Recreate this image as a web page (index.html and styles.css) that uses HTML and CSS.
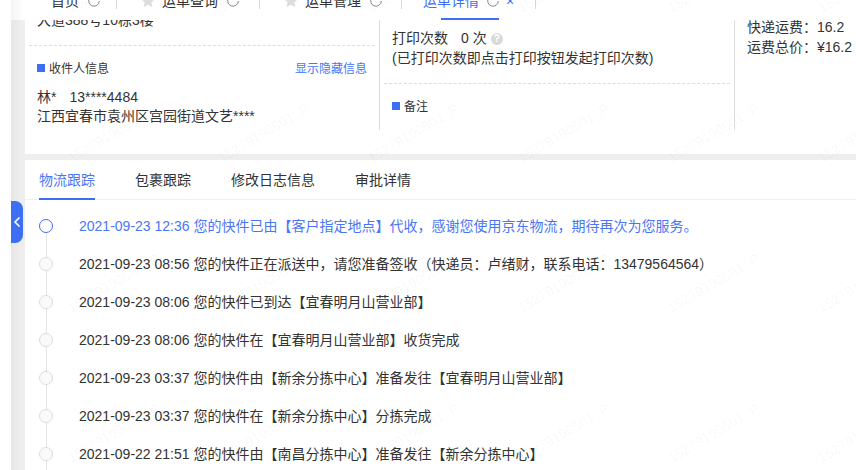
FILE: index.html
```html
<!DOCTYPE html>
<html lang="zh-CN">
<head>
    <meta charset="UTF-8">
    <title>运单详情</title>
    <link rel="stylesheet" href="styles.css">
</head>
<body>
    <svg class="icon-defs" width="0" height="0">
        <symbol id="star" viewBox="0 0 14 14"><path d="M7 0l2.1 4.5 4.9.6-3.6 3.3 1 4.8L7 10.8 2.6 13.2l1-4.8L0 5.1l4.9-.6z"/></symbol>
        <symbol id="refresh" viewBox="0 0 12 12"><path d="M10.3 2.800A5.300 5.300 0 1 0 11.300 6" fill="none" stroke="#888" stroke-width="1"/></symbol>
    </svg>
    <div class="page">
        <div class="gutter"></div>
        <div class="main">
            <!-- top tabs, scrolled partly out of view -->
            <div class="topbar">
                <div class="top-tabs">
                    <div class="top-tab tab-home"><span>首页</span><svg class="refresh"><use href="#refresh"/></svg></div>
                    <div class="top-tab tab-query"><svg class="star"><use href="#star"/></svg><span>运单查询</span><svg class="refresh"><use href="#refresh"/></svg></div>
                    <div class="top-tab tab-manage"><svg class="star"><use href="#star"/></svg><span>运单管理</span><svg class="refresh"><use href="#refresh"/></svg></div>
                    <div class="top-tab tab-detail active"><span>运单详情</span><svg class="refresh"><use href="#refresh"/></svg><span class="close">×</span></div>
                </div>
            </div>

            <div class="card info-card">
                <div class="col col-left">
                    <p class="clipped-address">大道388号10栋3楼</p>
                    <hr class="dashed">
                    <div class="section-head">
                        <span class="section-title">收件人信息</span>
                        <a class="link">显示隐藏信息</a>
                    </div>
                    <p class="line person"><span>林*</span><span class="phone">13****4484</span></p>
                    <p class="line">江西宜春市袁州区宫园街道文艺****</p>
                </div>
                <div class="col col-mid">
                    <p class="line print-count"><span>打印次数</span><span class="count">0 次</span><span class="help">?</span></p>
                    <p class="line">(已打印次数即点击打印按钮发起打印次数)</p>
                    <hr class="dashed">
                    <div class="section-head">
                        <span class="section-title">备注</span>
                    </div>
                </div>
                <div class="col-right">
                    <p class="line">快递运费：16.2</p>
                    <p class="line">运费总价：¥16.2</p>
                </div>
            </div>

            <div class="card track-card">
                <div class="track-tabs">
                    <span class="track-tab active">物流跟踪</span>
                    <span class="track-tab">包裹跟踪</span>
                    <span class="track-tab">修改日志信息</span>
                    <span class="track-tab">审批详情</span>
                </div>
                <ul class="timeline">
                    <li class="current"><i class="dot"></i>2021-09-23 12:36 您的快件已由【客户指定地点】代收，感谢您使用京东物流，期待再次为您服务。</li>
                    <li><i class="dot"></i>2021-09-23 08:56 您的快件正在派送中，请您准备签收（快递员：卢绪财，联系电话：13479564564）</li>
                    <li><i class="dot"></i>2021-09-23 08:06 您的快件已到达【宜春明月山营业部】</li>
                    <li><i class="dot"></i>2021-09-23 08:06 您的快件在【宜春明月山营业部】收货完成</li>
                    <li><i class="dot"></i>2021-09-23 03:37 您的快件由【新余分拣中心】准备发往【宜春明月山营业部】</li>
                    <li><i class="dot"></i>2021-09-23 03:37 您的快件在【新余分拣中心】分拣完成</li>
                    <li><i class="dot"></i>2021-09-22 21:51 您的快件由【南昌分拣中心】准备发往【新余分拣中心】</li>
                </ul>
            </div>
        </div>
    </div>

    <button class="collapse" title="收起">
        <svg width="8" height="12" viewBox="0 0 8 12"><path d="M6.5 1.500L2 6l4.500 4.500" fill="none" stroke="#fff" stroke-width="1.600"/></svg>
    </button>

    <!-- account watermark over the whole page -->
    <div class="watermarks">
        <span>15279190501_P</span><span>15279190501_P</span><span>15279190501_P</span><span>15279190501_P</span><span>15279190501_P</span><span>15279190501_P</span>
        <span>15279190501_P</span><span>15279190501_P</span><span>15279190501_P</span><span>15279190501_P</span><span>15279190501_P</span><span>15279190501_P</span>
        <span>15279190501_P</span><span>15279190501_P</span><span>15279190501_P</span><span>15279190501_P</span><span>15279190501_P</span><span>15279190501_P</span>
        <span>15279190501_P</span><span>15279190501_P</span><span>15279190501_P</span><span>15279190501_P</span><span>15279190501_P</span><span>15279190501_P</span>
    </div>
</body>
</html>
```

FILE: styles.css
```css
/* Common styles */
html, body {
    margin: 0;
    padding: 0;
    height: 470px;
    overflow: hidden;
}

body {
    position: relative;
    background-color: #fff;
    color: #333;
    font-family: "Liberation Sans", "Noto Sans CJK SC", sans-serif;
    font-size: 14px;
}

p {
    margin: 0;
}

.icon-defs {
    position: absolute;
}

.page {
    display: flex;
    height: 470px;
}

.gutter {
    width: 11px;
    flex: none;
}

.main {
    flex: 1;
    min-width: 0;
    background: linear-gradient(to right, #e6e6e6, #eee 10px);
}

/* Top tabs */
.topbar {
    height: 20px;
    overflow: hidden;
    background: linear-gradient(to right, #f4f4f4, #fff 12px);
}

.top-tabs {
    display: flex;
    align-items: flex-start;
    height: 28px;
    margin-top: -8px;
}

.top-tab {
    position: relative;
    display: flex;
    align-items: center;
    flex: none;
    height: 17px;
    line-height: 16px;
    border-right: 1px solid #d8d8d8;
    box-sizing: border-box;
}

.tab-home {
    width: 106px;
    padding-left: 40px;
}

.tab-query {
    width: 143px;
    padding-left: 24px;
}

.tab-manage {
    width: 142px;
    padding-left: 24px;
}

.tab-detail {
    width: 134px;
    padding-left: 21px;
    color: #3f6ff0;
}

.tab-detail::after {
    content: "";
    position: absolute;
    left: 39px;
    top: 26px;
    width: 58px;
    height: 2px;
    background-color: #3f6ff0;
}

.star {
    width: 14px;
    height: 14px;
    margin-right: 7px;
    fill: #ddd;
}

.refresh {
    width: 12px;
    height: 12px;
    margin-left: 9px;
}

.tab-detail .refresh {
    margin-left: 8px;
}

.close {
    margin-left: 7px;
    font-size: 14px;
}

/* Cards */
.card {
    margin-left: 14px;
    background-color: #fff;
}

.info-card {
    display: flex;
    height: 134px;
}

.col {
    flex: none;
    box-sizing: border-box;
    height: 110px;
    border-right: 1px solid #ddd;
    overflow: hidden;
}

.col-left {
    width: 355px;
    padding: 0 4px;
}

.col-mid {
    width: 355px;
    padding: 9px 4px 0;
}

.col-right {
    margin: -3px 0 0 12px;
}

.line {
    height: 19px;
    line-height: 19px;
    padding-left: 8px;
    white-space: nowrap;
}

.col-right .line {
    padding-left: 0;
    height: 20px;
    line-height: 20px;
}

.clipped-address {
    height: 25px;
    margin-top: -7px;
    padding-left: 8px;
    line-height: 14px;
}

.dashed {
    height: 0;
    margin: 0;
    border: none;
    border-top: 1px dashed #ddd;
}

.col-left .dashed {
    margin-top: 7px;
}

.col-mid .dashed {
    margin-top: 15px;
}

.section-head {
    display: flex;
    justify-content: space-between;
    align-items: center;
    height: 20px;
    margin: 11px 8px 11px;
    font-size: 12px;
}

.section-title {
    display: flex;
    align-items: center;
}

.section-title::before {
    content: "";
    width: 8px;
    height: 8px;
    margin: 1px 4px 0 0;
    background-color: #3f6ff0;
}

.link {
    color: #4a76f5;
}

.phone {
    margin-left: 13px;
}

.print-count {
    display: flex;
    align-items: center;
    margin-bottom: 1px;
}

.count {
    margin-left: 13px;
}

.help {
    width: 12px;
    height: 12px;
    margin-left: 4px;
    border-radius: 50%;
    background-color: #d9d9d9;
    color: #fff;
    font-size: 10px;
    font-weight: bold;
    line-height: 12px;
    text-align: center;
}

/* Tracking list */
.track-card {
    margin-top: 6px;
    height: 310px;
}

.track-tabs {
    display: flex;
    gap: 40px;
    height: 39px;
    padding-left: 14px;
    border-bottom: 1px solid #f0f0f0;
}

.track-tab {
    height: 38px;
    line-height: 40px;
}

.track-tab.active {
    height: 38px;
    color: #4a76f5;
    border-bottom: 2px solid #3f6ff0;
}

.timeline {
    margin: 0;
    padding: 7px 0 0 14px;
    list-style: none;
}

.timeline li {
    position: relative;
    display: flex;
    align-items: center;
    box-sizing: border-box;
    height: 38px;
    padding-bottom: 2px;
    white-space: nowrap;
}

.timeline li::before {
    content: "";
    position: absolute;
    left: 7px;
    top: 26px;
    width: 1px;
    height: 26px;
    background-color: #e4e4e4;
}

.dot {
    flex: none;
    box-sizing: border-box;
    width: 14px;
    height: 14px;
    margin: 2px 26px 0 0;
    border: 1px solid #dcdcdc;
    border-radius: 50%;
    background-color: #fafafa;
}

.current {
    color: #4a76f5;
}

.current .dot {
    border-color: #3f6ff0;
    background-color: #fff;
}

/* Collapse handle */
.collapse {
    position: absolute;
    left: 11px;
    top: 201px;
    display: flex;
    align-items: center;
    justify-content: center;
    width: 12px;
    height: 42px;
    padding: 0;
    border: none;
    border-radius: 0 8px 8px 0;
    background-color: #3d6ff5;
}

/* Watermark */
.watermarks {
    position: absolute;
    left: 38px;
    top: -92px;
    display: grid;
    grid-template-columns: repeat(6, 150px);
    grid-auto-rows: 150px;
    pointer-events: none;
}

.watermarks span {
    align-self: center;
    justify-self: center;
    transform: rotate(-30deg);
    color: rgba(0, 0, 0, 0.04);
    font-size: 14px;
    white-space: nowrap;
}
```
